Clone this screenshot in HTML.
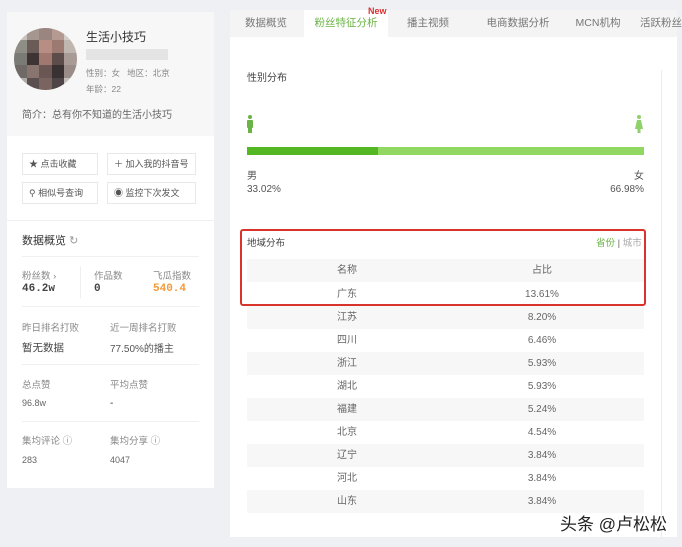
<!DOCTYPE html>
<html><head><meta charset="utf-8"><style>
*{margin:0;padding:0;box-sizing:border-box}
body{width:682px;height:547px;overflow:hidden;background:#eef0f3;font-family:"Liberation Sans","Noto Sans CJK SC",sans-serif;color:#444;position:relative;font-size:11px}
.a{position:absolute}
.left{left:7px;top:12px;width:207px;height:476px;background:#fff}
.ltop{left:7px;top:12px;width:207px;height:124px;background:#f7f7f8}
.btn{position:absolute;width:75px;height:22px;border:1px solid #e8e8e8;background:#fff;font-size:9px;color:#555;line-height:20px;padding-left:6px}
.lbl{font-size:9.5px;color:#888}
.val{font-size:10px;color:#333}
.hr{position:absolute;left:22px;width:177px;height:1px;background:#f0f0f0}
.tab{position:absolute;top:10px;height:27px;line-height:27px;font-size:10.5px;color:#777;text-align:center}
.row{position:absolute;left:247px;width:397px;height:23.3px;line-height:23px;font-size:10px;color:#666}
.row span{position:absolute;text-align:center}
.row .n{left:70px;width:60px}
.row .v{left:260px;width:70px}
.g{background:#f7f7f7}
.av{left:14px;top:28px;width:63px;height:62px;border-radius:50%;overflow:hidden;display:grid;grid-template-columns:repeat(5,1fr)}
.av i{display:block}
</style></head><body>
<div class="a left"></div>
<div class="a ltop"></div>
<div class="a av">
<i style="background:#c9c2bc"></i><i style="background:#a59690"></i><i style="background:#9a8580"></i><i style="background:#b59a92"></i><i style="background:#d4ccc6"></i>
<i style="background:#8e8e86"></i><i style="background:#6a5b56"></i><i style="background:#b88e84"></i><i style="background:#9c7a72"></i><i style="background:#c0b6b0"></i>
<i style="background:#7b7b76"></i><i style="background:#3e3434"></i><i style="background:#a07870"></i><i style="background:#5d4d4a"></i><i style="background:#a89a94"></i>
<i style="background:#6f6a68"></i><i style="background:#8a7470"></i><i style="background:#6a5652"></i><i style="background:#3a3232"></i><i style="background:#9a8c88"></i>
<i style="background:#b0aaa6"></i><i style="background:#5a5050"></i><i style="background:#7a6460"></i><i style="background:#4e4646"></i><i style="background:#c6c0bc"></i>
</div>
<div class="a" style="left:86px;top:28px;font-size:12px;color:#333">生活小技巧</div>
<div class="a" style="left:86px;top:49px;width:82px;height:11px;background:#e4e4e4"></div>
<div class="a lbl" style="left:86px;top:67px;font-size:8.5px">性别：女 &nbsp; 地区：北京</div>
<div class="a lbl" style="left:86px;top:83px;font-size:8.5px">年龄：22</div>
<div class="a" style="left:22px;top:106px;font-size:10px;color:#666">简介：总有你不知道的生活小技巧</div>
<div class="btn" style="left:22px;top:153px;width:76px">★ 点击收藏</div>
<div class="btn" style="left:107px;top:153px;width:89px">＋ 加入我的抖音号</div>
<div class="btn" style="left:22px;top:182px;width:76px">⚲ 相似号查询</div>
<div class="btn" style="left:107px;top:182px;width:89px">◉ 监控下次发文</div>
<div class="hr" style="left:7px;width:207px;top:220px"></div>
<div class="a" style="left:22px;top:232px;font-size:11px;color:#333">数据概览 <span style="color:#999">↻</span></div>
<div class="hr" style="top:256px"></div>
<div class="a lbl" style="left:22px;top:268px">粉丝数 ›</div>
<div class="a lbl" style="left:94px;top:268px">作品数</div>
<div class="a lbl" style="left:153px;top:268px">飞瓜指数</div>
<div class="a" style="left:22px;top:283px;font-size:11px;font-weight:bold;font-family:'Liberation Mono',monospace">46.2w</div>
<div class="a" style="left:94px;top:283px;font-size:11px;font-weight:bold;font-family:'Liberation Mono',monospace">0</div>
<div class="a" style="left:153px;top:283px;font-size:11px;font-weight:bold;color:#f39a3a;font-family:'Liberation Mono',monospace">540.4</div>
<div class="a" style="left:80px;top:266px;width:1px;height:32px;background:#f0f0f0"></div>
<div class="hr" style="top:306px"></div>
<div class="a lbl" style="left:22px;top:320px">昨日排名打败</div>
<div class="a lbl" style="left:110px;top:320px">近一周排名打败</div>
<div class="a" style="left:22px;top:340px;font-size:10.5px">暂无数据</div>
<div class="a" style="left:110px;top:340px;font-size:10px;color:#555">77.50%的播主</div>
<div class="hr" style="top:364px"></div>
<div class="a lbl" style="left:22px;top:377px">总点赞</div>
<div class="a lbl" style="left:110px;top:377px">平均点赞</div>
<div class="a val" style="left:22px;top:398px;font-size:9px;color:#666">96.8w</div>
<div class="a val" style="left:110px;top:398px">-</div>
<div class="hr" style="top:421px"></div>
<div class="a lbl" style="left:22px;top:433px">集均评论 ⓘ</div>
<div class="a lbl" style="left:110px;top:433px">集均分享 ⓘ</div>
<div class="a val" style="left:22px;top:455px;font-size:9px;color:#666">283</div>
<div class="a val" style="left:110px;top:455px;font-size:9px;color:#666">4047</div>

<div class="a" style="left:230px;top:10px;width:447px;height:27px;background:#f4f4f5"></div>
<div class="a" style="left:230px;top:37px;width:447px;height:500px;background:#fff"></div>
<div class="a" style="left:661px;top:70px;width:1px;height:467px;background:#ececec"></div>
<div class="tab" style="left:230px;width:72px">数据概览</div>
<div class="tab" style="left:304px;width:84px;background:#fff;color:#6ab344">粉丝特征分析</div>
<div class="a" style="left:368px;top:6px;font-size:9px;font-weight:bold;color:#d83030">New</div>
<div class="tab" style="left:388px;width:80px">播主视频</div>
<div class="tab" style="left:468px;width:100px">电商数据分析</div>
<div class="tab" style="left:568px;width:60px">MCN机构</div>
<div class="tab" style="left:630px;width:60px;text-align:left;padding-left:10px">活跃粉丝</div>

<div class="a" style="left:247px;top:69px;font-size:10px">性别分布</div>
<svg class="a" style="left:246px;top:115px" width="8" height="19" viewBox="0 0 8 19"><circle cx="4" cy="2" r="2" fill="#6ab344"/><rect x="1" y="5" width="6" height="8" rx="1" fill="#6ab344"/><rect x="2" y="12" width="4" height="6" fill="#6ab344"/></svg>
<svg class="a" style="left:635px;top:115px" width="8" height="19" viewBox="0 0 8 19"><circle cx="4" cy="2" r="2" fill="#8fd16b"/><path d="M2 5h4l2 9H0z" fill="#8fd16b"/><rect x="2.5" y="13" width="3" height="5" fill="#8fd16b"/></svg>
<div class="a" style="left:247px;top:147px;width:397px;height:8px;background:#90d862"></div>
<div class="a" style="left:247px;top:147px;width:131px;height:8px;background:#54b824"></div>
<div class="a" style="left:247px;top:170px;font-size:10px;color:#555;line-height:13px">男<br>33.02%</div>
<div class="a" style="left:600px;top:170px;width:44px;text-align:right;font-size:10px;color:#555;line-height:13px">女<br>66.98%</div>

<div class="a" style="left:247px;top:235px;font-size:9.5px">地域分布</div>
<div class="a" style="left:596px;top:235px;font-size:9.5px;color:#6ab344">省份 <span style="color:#666">|</span> <span style="color:#aaa">城市</span></div>
<div class="row g" style="top:259px"><span class="n">名称</span><span class="v">占比</span></div>
<div class="row" style="top:283px"><span class="n">广东</span><span class="v">13.61%</span></div>
<div class="row g" style="top:306px"><span class="n">江苏</span><span class="v">8.20%</span></div>
<div class="row" style="top:329px"><span class="n">四川</span><span class="v">6.46%</span></div>
<div class="row g" style="top:352px"><span class="n">浙江</span><span class="v">5.93%</span></div>
<div class="row" style="top:375px"><span class="n">湖北</span><span class="v">5.93%</span></div>
<div class="row g" style="top:398px"><span class="n">福建</span><span class="v">5.24%</span></div>
<div class="row" style="top:421px"><span class="n">北京</span><span class="v">4.54%</span></div>
<div class="row g" style="top:444px"><span class="n">辽宁</span><span class="v">3.84%</span></div>
<div class="row" style="top:467px"><span class="n">河北</span><span class="v">3.84%</span></div>
<div class="row g" style="top:490px"><span class="n">山东</span><span class="v">3.84%</span></div>
<div class="a" style="left:240px;top:229px;width:406px;height:77px;border:2px solid #d9342b;border-radius:3px"></div>
<div class="a" style="left:560px;top:510px;font-size:17px;color:#222;text-shadow:0 0 3px #fff,0 0 3px #fff">头条 @卢松松</div>
</body></html>
